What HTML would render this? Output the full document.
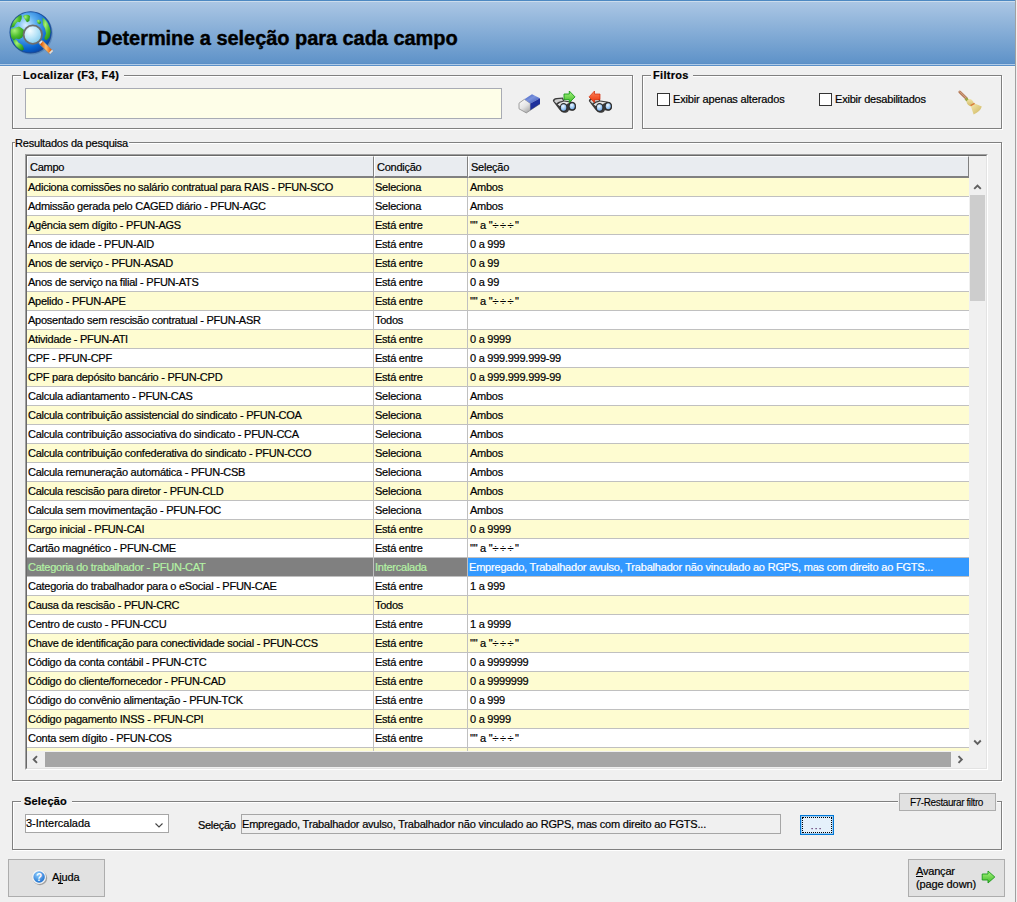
<!DOCTYPE html>
<html><head><meta charset="utf-8">
<style>
*{margin:0;padding:0;box-sizing:border-box}
html,body{width:1017px;height:902px;overflow:hidden;background:#f0f0f0;font-family:"Liberation Sans",sans-serif;font-size:11px;color:#000}
.a{position:absolute}
.t{position:absolute;white-space:pre;line-height:13px;letter-spacing:-0.25px;-webkit-text-stroke:0.2px}
#hdr{left:0;top:0;width:1015px;height:66px;background:linear-gradient(#adc8e5,#5b90c7)}
.gl{position:absolute;background:#a0a0a0}
.gw{position:absolute;background:#fff}
</style></head><body>
<!-- header -->
<div id="hdr" class="a"></div>
<div class="a" style="left:0;top:0;width:1015px;height:1px;background:#4d89c2"></div>
<div class="a" style="left:0;top:1px;width:1015px;height:1px;background:#cbdcec"></div>
<div class="a" style="left:0;top:63px;width:1015px;height:1px;background:#5a8fc7"></div>
<div class="a" style="left:0;top:64px;width:1015px;height:1px;background:#b0cbe7"></div>
<div class="a" style="left:0;top:65px;width:1015px;height:1px;background:#5a8fc7"></div>
<div class="a" style="left:0;top:66px;width:1015px;height:1px;background:#f6f4f1"></div>
<div class="a" style="left:1015px;top:0;width:1px;height:902px;background:#a0a0a0"></div>
<div class="t" style="left:97px;top:26px;font-size:20px;font-weight:bold;line-height:24px;letter-spacing:-0.05px;-webkit-text-stroke:0.4px">Determine a seleção para cada campo</div>
<!--LOGO-->
<svg class="a" style="left:0;top:0" width="70" height="65">
<defs>
<radialGradient id="gl" cx="0.38" cy="0.33" r="0.7"><stop offset="0" stop-color="#d8efff"/><stop offset="0.35" stop-color="#5fb0f0"/><stop offset="0.8" stop-color="#0a64d0"/><stop offset="1" stop-color="#0848a8"/></radialGradient>
<radialGradient id="gr" cx="0.35" cy="0.3" r="0.8"><stop offset="0" stop-color="#a8f07a"/><stop offset="0.5" stop-color="#50c030"/><stop offset="1" stop-color="#208a18"/></radialGradient>
<radialGradient id="ln" cx="0.35" cy="0.3" r="0.8"><stop offset="0" stop-color="#f4fcff"/><stop offset="0.5" stop-color="#b8e4f8"/><stop offset="1" stop-color="#7cc6ea"/></radialGradient>
<linearGradient id="hd" x1="0" y1="0" x2="1" y2="0"><stop offset="0" stop-color="#e06010"/><stop offset="0.5" stop-color="#ffc070"/><stop offset="1" stop-color="#e86a10"/></linearGradient>
<clipPath id="gc"><circle cx="30.6" cy="32.3" r="20.8"/></clipPath>
</defs>
<circle cx="31.4" cy="33.2" r="21.4" fill="#2a5a90" opacity="0.35"/>
<circle cx="30.6" cy="32.3" r="20.8" fill="url(#gl)"/>
<g clip-path="url(#gc)" fill="url(#gr)">
<path d="M10 22 Q13 16.5 19 15 L21.8 15.6 L21.6 19 L20 22.2 L17.5 21.8 L15.6 24 L14 27 L9.5 28 Z"/>
<path d="M9.5 29.5 L14 28 L19 26.4 L21.5 28 L23.8 29.8 L24.2 33.5 L22.2 37.6 L19 39.2 L16 38.6 L13.6 40.5 L10.5 37 Z"/>
<path d="M23 16 Q27 13.6 30 16 L29.4 21 L27 22.2 L25 19.6 Z"/>
<path d="M36.6 20.4 L39 19.4 L41.2 22.2 L40 24.2 L37.8 23.6 Z"/>
<path d="M42.4 17.6 Q46.6 20 49 25.5 L51 31 L49.5 37.5 L46.2 40.6 L44.2 38.4 L46 33.5 L45 28.4 L43 25 Z"/>
<path d="M13 40.5 L16.2 39.4 L18.4 42.4 L22.4 45 L24.2 49.2 L21 51.6 L16.6 49.2 Z"/>
</g>
<circle cx="30.6" cy="32.3" r="20.6" fill="none" stroke="#1c4a94" stroke-width="1.1" opacity="0.85"/>
<circle cx="32.8" cy="34.6" r="9.2" fill="url(#ln)" stroke="#6e6e6e" stroke-width="1.8"/>
<path d="M40.2 41.6 L51.6 52.8" stroke="#8a8a8a" stroke-width="5.2" stroke-linecap="butt"/>
<path d="M41.4 42.8 L50.4 51.6" stroke="url(#hd)" stroke-width="4.2"/>
<path d="M39.6 43.4 L42 41" stroke="#e8e8e8" stroke-width="1.6"/>
<path d="M49.6 53.4 L52.6 50.4" stroke="#e0e0e0" stroke-width="1.6"/>
</svg>
<!--ICONS-->
<svg class="a" style="left:514px;top:88px" width="30" height="30">
<defs><linearGradient id="ew" x1="0" y1="0" x2="0.6" y2="1"><stop offset="0" stop-color="#ffffff"/><stop offset="0.6" stop-color="#e4e4e4"/><stop offset="1" stop-color="#b0b0b0"/></linearGradient>
<linearGradient id="et" x1="0" y1="0" x2="1" y2="1"><stop offset="0" stop-color="#3a56c0"/><stop offset="0.45" stop-color="#7a92dc"/><stop offset="1" stop-color="#3550b8"/></linearGradient></defs>
<path d="M5 15.2 L10.4 11.3 L16.4 15.4 L16.4 22.2 L12.3 24.9 L5 20.8 Z" fill="url(#ew)" stroke="#8c8c8c" stroke-width="0.8" stroke-linejoin="round"/>
<path d="M10.4 11.3 L18 6.2 L26 10.3 L16.4 15.4 Z" fill="url(#et)"/>
<path d="M16.4 15.4 L26 10.3 L26 15.9 L16.4 22.2 Z" fill="#1f309c"/>
<path d="M16.4 22.2 L26 15.9" stroke="#555" stroke-width="0.7" opacity="0.6"/>
</svg>
<svg class="a" style="left:549px;top:88px" width="30" height="30">
<defs><linearGradient id="bg1" x1="0" y1="0" x2="1" y2="1"><stop offset="0" stop-color="#9a9a9a"/><stop offset="0.5" stop-color="#e8e8e8"/><stop offset="1" stop-color="#6a6a6a"/></linearGradient>
<radialGradient id="lens" cx="0.4" cy="0.3" r="0.8"><stop offset="0" stop-color="#f0f8ff"/><stop offset="0.6" stop-color="#9cc8f4"/><stop offset="1" stop-color="#6aa0e0"/></radialGradient>
<linearGradient id="ga" x1="0" y1="0" x2="0" y2="1"><stop offset="0" stop-color="#a8f880"/><stop offset="1" stop-color="#40b828"/></linearGradient>
<linearGradient id="ra" x1="0" y1="0" x2="0" y2="1"><stop offset="0" stop-color="#ff8a60"/><stop offset="1" stop-color="#e83008"/></linearGradient></defs>
<path d="M3.8 13 Q4 10.4 7.5 10 L13.8 9.4 L15.2 12.4 L22 13.4 Q26.6 14.2 27 18.2 Q27.2 22.6 23.2 22.8 L19.8 22.2 Q18.8 25 14.8 24.8 Q12.2 24.4 10.4 21.8 Z" fill="#3c3c3c"/>
<path d="M5.2 13.2 Q5.6 11.4 8 11.2 L13 10.8 L14 12.8 Q9 13.6 7.6 15.4 Z" fill="#cfcfcf"/>
<path d="M8.6 16.6 Q10.4 14.4 15 13.6 L21.5 14.4 Q18 15.2 17.5 16.6 Q13.5 15.6 11.5 18.6 Z" fill="#e6e6e6"/>
<ellipse cx="14.6" cy="19.5" rx="3.9" ry="4.4" fill="#2e2e2e"/>
<ellipse cx="14.6" cy="19.5" rx="2.7" ry="3.2" fill="url(#lens)"/>
<ellipse cx="23.2" cy="18.3" rx="3.7" ry="4.2" fill="#2e2e2e"/>
<ellipse cx="23.2" cy="18.3" rx="2.5" ry="3" fill="url(#lens)"/>
<path d="M15 6 L20.3 6 L20.3 3 L26 8.9 L20.3 14.7 L20.3 11.7 L15 11.7 Z" fill="url(#ga)" stroke="#1a9a1a" stroke-width="0.9"/>
</svg>
<svg class="a" style="left:585px;top:88px" width="30" height="30">
<path d="M3.8 13 Q4 10.4 7.5 10 L13.8 9.4 L15.2 12.4 L22 13.4 Q26.6 14.2 27 18.2 Q27.2 22.6 23.2 22.8 L19.8 22.2 Q18.8 25 14.8 24.8 Q12.2 24.4 10.4 21.8 Z" fill="#3c3c3c"/>
<path d="M5.2 13.2 Q5.6 11.4 8 11.2 L13 10.8 L14 12.8 Q9 13.6 7.6 15.4 Z" fill="#cfcfcf"/>
<path d="M8.6 16.6 Q10.4 14.4 15 13.6 L21.5 14.4 Q18 15.2 17.5 16.6 Q13.5 15.6 11.5 18.6 Z" fill="#e6e6e6"/>
<ellipse cx="14.6" cy="19.5" rx="3.9" ry="4.4" fill="#2e2e2e"/>
<ellipse cx="14.6" cy="19.5" rx="2.7" ry="3.2" fill="url(#lens)"/>
<ellipse cx="23.2" cy="18.3" rx="3.7" ry="4.2" fill="#2e2e2e"/>
<ellipse cx="23.2" cy="18.3" rx="2.5" ry="3" fill="url(#lens)"/>
<path d="M15 6 L9.5 6 L9.5 3 L4 8.9 L9.5 14.7 L9.5 11.7 L15 11.7 Z" fill="url(#ra)" stroke="#d02a08" stroke-width="0.7"/>
</svg>
<svg class="a" style="left:940px;top:80px" width="60" height="40">
<defs><linearGradient id="br" x1="0" y1="0" x2="1" y2="1"><stop offset="0" stop-color="#f6eab0"/><stop offset="1" stop-color="#cdb45e"/></linearGradient></defs>
<path d="M19.8 12 L26.5 18.6" stroke="#b47a58" stroke-width="2.8" stroke-linecap="round"/>
<path d="M19.8 11.6 L26 17.8" stroke="#d8a888" stroke-width="1" stroke-linecap="round"/>
<path d="M25.6 18.4 L28 20.8" stroke="#9aa848" stroke-width="3"/>
<ellipse cx="30.2" cy="22.6" rx="3.6" ry="3.1" transform="rotate(45 30.2 22.6)" fill="url(#br)"/>
<path d="M30.6 25.4 L34.2 23.2 L41.8 26.6 Q40.5 31.5 33.6 34.4 Z" fill="url(#br)"/>
<path d="M30.6 25.6 L34.6 23.4" stroke="#d87838" stroke-width="1.4"/>
</svg>




<style>
.grp{position:absolute;border:1px solid #808080;box-shadow:inset 1px 1px #fff,1px 1px #fff}
.lbl{position:absolute;background:#f0f0f0;white-space:pre;line-height:13px;-webkit-text-stroke:0.2px}
.cb{position:absolute;width:13px;height:13px;border:1px solid #333;background:#fff}
</style>
<div class="grp" style="left:12px;top:75px;width:621px;height:54px"></div>
<div class="lbl" style="left:21px;top:69px;width:103px;padding-left:2px;font-weight:bold;letter-spacing:0.35px">Localizar (F3, F4)</div>
<div class="a" style="left:25px;top:88px;width:477px;height:31px;border:1px solid #a8abb4;background:#fefee8"></div>
<div class="grp" style="left:642px;top:75px;width:360px;height:54px"></div>
<div class="lbl" style="left:651px;top:69px;width:42px;padding-left:2px;font-weight:bold;letter-spacing:0.3px">Filtros</div>
<div class="cb" style="left:657px;top:93px"></div>
<div class="t" style="left:673px;top:93px;letter-spacing:-0.15px">Exibir apenas alterados</div>
<div class="cb" style="left:819px;top:93px"></div>
<div class="t" style="left:835px;top:93px;letter-spacing:-0.2px">Exibir desabilitados</div>
<div class="grp" style="left:12px;top:142px;width:990px;height:639px"></div>
<div class="lbl" style="left:15px;top:137px;width:114px;padding-left:0px;letter-spacing:-0.2px">Resultados da pesquisa</div>
<div class="grp" style="left:12px;top:801px;width:990px;height:49px"></div>
<div class="lbl" style="left:21px;top:795px;width:51px;padding-left:3px;font-weight:bold;letter-spacing:0.2px">Seleção</div>


<!--GRID-->
<style>
.gr{position:absolute;left:27px;width:942px;height:19px;border-bottom:1px solid #c0c0c0}
.y{background:#fefcd1}.w{background:#fff}
.vl{position:absolute;width:1px;background:#c0c0c0}
.c{position:absolute;top:3px;white-space:pre;line-height:13px;letter-spacing:-0.25px;-webkit-text-stroke:0.2px}
.hc{position:absolute;top:156px;height:22px;background:#e9ecf0;border-left:1px solid #fff;border-top:1px solid #fff;border-right:1px solid #808080;border-bottom:2px solid #808080}
.sel1{background:#808080;color:#b4f2a4}
</style>
<div class="a" style="left:25px;top:154px;width:963px;height:616px;border-left:1px solid #a0a0a0;border-top:1px solid #a0a0a0;border-right:1px solid #fff;border-bottom:1px solid #fff"></div>
<div class="a" style="left:26px;top:155px;width:961px;height:614px;border-left:1px solid #696969;border-top:1px solid #696969;border-right:1px solid #e3e3e3;border-bottom:1px solid #e3e3e3;background:#fff"></div>
<div class="a" style="left:27px;top:156px;width:959px;height:612px;background:#f0f0f0"></div>

<div class="hc" style="left:27px;width:347px"><div class="c" style="left:2px;top:4px">Campo</div></div>
<div class="hc" style="left:374px;width:94px"><div class="c" style="left:2px;top:4px">Condição</div></div>
<div class="hc" style="left:468px;width:501px"><div class="c" style="left:2px;top:4px">Seleção</div></div>
<div class="gr y" style="top:178px"><div class="c" style="left:1px">Adiciona comissões no salário contratual para RAIS - PFUN-SCO</div><div class="c" style="left:348px">Seleciona</div><div class="c" style="left:443px">Ambos</div></div>
<div class="gr w" style="top:197px"><div class="c" style="left:1px">Admissão gerada pelo CAGED diário - PFUN-AGC</div><div class="c" style="left:348px">Seleciona</div><div class="c" style="left:443px">Ambos</div></div>
<div class="gr y" style="top:216px"><div class="c" style="left:1px">Agência sem dígito - PFUN-AGS</div><div class="c" style="left:348px">Está entre</div><div class="c" style="left:443px">&quot;&quot; a &quot;<span style="letter-spacing:1.5px">÷÷÷</span>&quot;</div></div>
<div class="gr w" style="top:235px"><div class="c" style="left:1px">Anos de idade - PFUN-AID</div><div class="c" style="left:348px">Está entre</div><div class="c" style="left:443px">0 a 999</div></div>
<div class="gr y" style="top:254px"><div class="c" style="left:1px">Anos de serviço - PFUN-ASAD</div><div class="c" style="left:348px">Está entre</div><div class="c" style="left:443px">0 a 99</div></div>
<div class="gr w" style="top:273px"><div class="c" style="left:1px">Anos de serviço na filial - PFUN-ATS</div><div class="c" style="left:348px">Está entre</div><div class="c" style="left:443px">0 a 99</div></div>
<div class="gr y" style="top:292px"><div class="c" style="left:1px">Apelido - PFUN-APE</div><div class="c" style="left:348px">Está entre</div><div class="c" style="left:443px">&quot;&quot; a &quot;<span style="letter-spacing:1.5px">÷÷÷</span>&quot;</div></div>
<div class="gr w" style="top:311px"><div class="c" style="left:1px">Aposentado sem rescisão contratual - PFUN-ASR</div><div class="c" style="left:348px">Todos</div><div class="c" style="left:443px"></div></div>
<div class="gr y" style="top:330px"><div class="c" style="left:1px">Atividade - PFUN-ATI</div><div class="c" style="left:348px">Está entre</div><div class="c" style="left:443px">0 a 9999</div></div>
<div class="gr w" style="top:349px"><div class="c" style="left:1px">CPF - PFUN-CPF</div><div class="c" style="left:348px">Está entre</div><div class="c" style="left:443px">0 a 999.999.999-99</div></div>
<div class="gr y" style="top:368px"><div class="c" style="left:1px">CPF para depósito bancário - PFUN-CPD</div><div class="c" style="left:348px">Está entre</div><div class="c" style="left:443px">0 a 999.999.999-99</div></div>
<div class="gr w" style="top:387px"><div class="c" style="left:1px">Calcula adiantamento - PFUN-CAS</div><div class="c" style="left:348px">Seleciona</div><div class="c" style="left:443px">Ambos</div></div>
<div class="gr y" style="top:406px"><div class="c" style="left:1px">Calcula contribuição assistencial do sindicato - PFUN-COA</div><div class="c" style="left:348px">Seleciona</div><div class="c" style="left:443px">Ambos</div></div>
<div class="gr w" style="top:425px"><div class="c" style="left:1px">Calcula contribuição associativa do sindicato - PFUN-CCA</div><div class="c" style="left:348px">Seleciona</div><div class="c" style="left:443px">Ambos</div></div>
<div class="gr y" style="top:444px"><div class="c" style="left:1px">Calcula contribuição confederativa do sindicato - PFUN-CCO</div><div class="c" style="left:348px">Seleciona</div><div class="c" style="left:443px">Ambos</div></div>
<div class="gr w" style="top:463px"><div class="c" style="left:1px">Calcula remuneração automática - PFUN-CSB</div><div class="c" style="left:348px">Seleciona</div><div class="c" style="left:443px">Ambos</div></div>
<div class="gr y" style="top:482px"><div class="c" style="left:1px">Calcula rescisão para diretor - PFUN-CLD</div><div class="c" style="left:348px">Seleciona</div><div class="c" style="left:443px">Ambos</div></div>
<div class="gr w" style="top:501px"><div class="c" style="left:1px">Calcula sem movimentação - PFUN-FOC</div><div class="c" style="left:348px">Seleciona</div><div class="c" style="left:443px">Ambos</div></div>
<div class="gr y" style="top:520px"><div class="c" style="left:1px">Cargo inicial - PFUN-CAI</div><div class="c" style="left:348px">Está entre</div><div class="c" style="left:443px">0 a 9999</div></div>
<div class="gr w" style="top:539px"><div class="c" style="left:1px">Cartão magnético - PFUN-CME</div><div class="c" style="left:348px">Está entre</div><div class="c" style="left:443px">&quot;&quot; a &quot;<span style="letter-spacing:1.5px">÷÷÷</span>&quot;</div></div>
<div class="gr w" style="top:558px;height:19px"><div class="a sel1" style="left:0;top:0;width:346px;height:18px"></div><div class="a sel1" style="left:347px;top:0;width:93px;height:18px"></div><div class="a" style="left:441px;top:0;width:501px;height:18px;background:#3399ff"></div><div class="c" style="left:1px;color:#b4f2a4">Categoria do trabalhador - PFUN-CAT</div><div class="c" style="left:348px;color:#b4f2a4">Intercalada</div><div class="c" style="left:442px;color:#fff;letter-spacing:-0.2px">Empregado, Trabalhador avulso, Trabalhador não vinculado ao RGPS, mas com direito ao FGTS...</div></div>
<div class="gr w" style="top:577px"><div class="c" style="left:1px">Categoria do trabalhador para o eSocial - PFUN-CAE</div><div class="c" style="left:348px">Está entre</div><div class="c" style="left:443px">1 a 999</div></div>
<div class="gr y" style="top:596px"><div class="c" style="left:1px">Causa da rescisão - PFUN-CRC</div><div class="c" style="left:348px">Todos</div><div class="c" style="left:443px"></div></div>
<div class="gr w" style="top:615px"><div class="c" style="left:1px">Centro de custo - PFUN-CCU</div><div class="c" style="left:348px">Está entre</div><div class="c" style="left:443px">1 a 9999</div></div>
<div class="gr y" style="top:634px"><div class="c" style="left:1px">Chave de identificação para conectividade social - PFUN-CCS</div><div class="c" style="left:348px">Está entre</div><div class="c" style="left:443px">&quot;&quot; a &quot;<span style="letter-spacing:1.5px">÷÷÷</span>&quot;</div></div>
<div class="gr w" style="top:653px"><div class="c" style="left:1px">Código da conta contábil - PFUN-CTC</div><div class="c" style="left:348px">Está entre</div><div class="c" style="left:443px">0 a 9999999</div></div>
<div class="gr y" style="top:672px"><div class="c" style="left:1px">Código do cliente/fornecedor - PFUN-CAD</div><div class="c" style="left:348px">Está entre</div><div class="c" style="left:443px">0 a 9999999</div></div>
<div class="gr w" style="top:691px"><div class="c" style="left:1px">Código do convênio alimentação - PFUN-TCK</div><div class="c" style="left:348px">Está entre</div><div class="c" style="left:443px">0 a 999</div></div>
<div class="gr y" style="top:710px"><div class="c" style="left:1px">Código pagamento INSS - PFUN-CPI</div><div class="c" style="left:348px">Está entre</div><div class="c" style="left:443px">0 a 9999</div></div>
<div class="gr w" style="top:729px"><div class="c" style="left:1px">Conta sem dígito - PFUN-COS</div><div class="c" style="left:348px">Está entre</div><div class="c" style="left:443px">&quot;&quot; a &quot;<span style="letter-spacing:1.5px">÷÷÷</span>&quot;</div></div>
<div class="gr y" style="top:748px;height:3px;border:0"></div>
<div class="vl" style="left:373px;top:178px;height:573px"></div>
<div class="vl" style="left:467px;top:178px;height:573px"></div>
<div class="a" style="left:969px;top:156px;width:17px;height:612px;background:#f0f0f0"></div>
<div class="a" style="left:970px;top:195px;width:15px;height:106px;background:#cdcdcd"></div>
<svg class="a" style="left:969px;top:178px" width="17" height="17"><path d="M5.2 10.8 L8.5 7.5 L11.8 10.8" fill="none" stroke="#606060" stroke-width="1.9"/></svg>
<svg class="a" style="left:969px;top:734px" width="17" height="17"><path d="M5.2 6.5 L8.5 9.8 L11.8 6.5" fill="none" stroke="#606060" stroke-width="1.9"/></svg>
<div class="a" style="left:27px;top:751px;width:942px;height:17px;background:#f0f0f0"></div>
<div class="a" style="left:45px;top:752px;width:906px;height:15px;background:#a6a6a6"></div>
<svg class="a" style="left:27px;top:751px" width="17" height="17"><path d="M10 5.2 L6.7 8.5 L10 11.8" fill="none" stroke="#606060" stroke-width="1.9"/></svg>
<svg class="a" style="left:951px;top:751px" width="17" height="17"><path d="M7.5 5.2 L10.8 8.5 L7.5 11.8" fill="none" stroke="#606060" stroke-width="1.9"/></svg>

<!--/GRID-->

<!--BOTTOM-->
<div class="a" style="left:25px;top:814px;width:144px;height:19px;border:1px solid #a6a6a6;background:#fff"></div>
<div class="t" style="left:26px;top:817px;letter-spacing:0">3-Intercalada</div>
<svg class="a" style="left:153px;top:820px" width="12" height="10"><path d="M2.5 3.5 L6 7 L9.5 3.5" fill="none" stroke="#444" stroke-width="1.1"/></svg>
<div class="t" style="left:198px;top:819px;letter-spacing:-0.3px">Seleção</div>
<div class="a" style="left:241px;top:814px;width:540px;height:20px;border:1px solid #a6a6a6;background:#f0f0f0"></div>
<div class="t" style="left:242px;top:818px;letter-spacing:-0.2px">Empregado, Trabalhador avulso, Trabalhador não vinculado ao RGPS, mas com direito ao FGTS...</div>
<div class="a" style="left:800px;top:815px;width:34px;height:20px;border:1px solid #0078d7;box-shadow:inset 0 0 0 1px rgba(0,120,215,0.3);background:#e5f1fb"></div>
<div class="a" style="left:802px;top:817px;width:30px;height:16px;border:1px dotted #000"></div>
<svg class="a" style="left:800px;top:815px" width="34" height="20"><rect x="11.5" y="13" width="1.2" height="1.2" fill="#502060"/><rect x="15.5" y="13" width="1.2" height="1.2" fill="#502060"/><rect x="19.5" y="13" width="1.2" height="1.2" fill="#502060"/></svg>
<div class="a" style="left:899px;top:793px;width:97px;height:18px;border:1px solid #adadad;background:#e1e1e1;box-shadow:0 0 0 1px #f0f0f0"></div>
<div class="t" style="left:910px;top:796px;font-size:10px;letter-spacing:-0.4px;-webkit-text-stroke:0.1px">F7-Restaurar filtro</div>
<div class="a" style="left:8px;top:859px;width:97px;height:38px;border:1px solid #adadad;background:#e1e1e1"></div>
<div class="t" style="left:52px;top:871px;letter-spacing:-0.1px">Ajuda</div>
<div class="a" style="left:58px;top:883px;width:5px;height:1px;background:#000"></div>
<div class="a" style="left:908px;top:859px;width:97px;height:38px;border:1px solid #adadad;background:#e1e1e1"></div>
<div class="t" style="left:916px;top:865px;letter-spacing:-0.2px"><u style="text-decoration-skip-ink:none">A</u>vançar</div>
<div class="t" style="left:916px;top:878px;letter-spacing:-0.1px">(page down)</div>
<!--/BOTTOM-->
<!--ICONS2-->
<svg class="a" style="left:30px;top:868px" width="20" height="20">
<defs><radialGradient id="hq" cx="0.4" cy="0.3" r="0.8"><stop offset="0" stop-color="#90ccff"/><stop offset="1" stop-color="#1468c8"/></radialGradient></defs>
<circle cx="10" cy="10" r="7.2" fill="#555" opacity="0.45"/>
<circle cx="9.1" cy="9" r="6.9" fill="#f6f6f6"/>
<circle cx="9.1" cy="9" r="5.7" fill="url(#hq)"/>
<text x="9.1" y="12.7" text-anchor="middle" font-family="Liberation Sans" font-weight="bold" font-size="10" fill="#fff">?</text>
</svg>
<svg class="a" style="left:980px;top:869px" width="18" height="17">
<defs><linearGradient id="ag" x1="0" y1="0" x2="0" y2="1"><stop offset="0" stop-color="#a8f880"/><stop offset="1" stop-color="#40b828"/></linearGradient></defs>
<path d="M2.2 5 L8 5 L8 2 L14.8 8 L8 14 L8 11 L2.2 11 Z" fill="url(#ag)" stroke="#1a9a1a" stroke-width="0.9"/>
</svg>
</body></html>
